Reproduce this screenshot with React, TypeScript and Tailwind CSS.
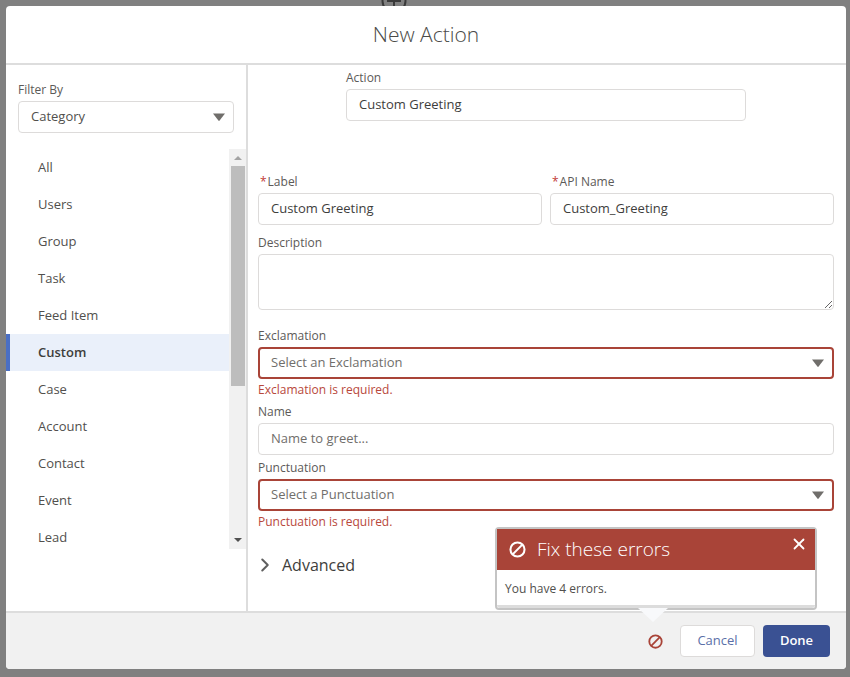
import { ChevronRight, X } from "lucide-react";

const CATEGORIES = ["All", "Users", "Group", "Task", "Feed Item", "Custom", "Case", "Account", "Contact", "Event", "Lead"];

const fieldLabel = "mb-0.5 block text-xs leading-[18px] text-[#5c5a58]";
const inputBox =
  "block h-8 w-full rounded border border-[#dddbda] bg-white px-3 pb-0.5 text-[13px] text-[#3e3e3c] outline-none placeholder:text-[#706e6b]";

function Caret() {
  return (
    <svg viewBox="0 0 12 8" className="h-2 w-3 shrink-0 fill-[#706e6b]">
      <path d="M0 0.5h12L6.6 7.6a.8.8 0 0 1-1.2 0z" />
    </svg>
  );
}

function NoEntry({ className }: { className: string }) {
  return (
    <svg viewBox="0 0 14 14" fill="none" stroke="currentColor" strokeWidth="1.7" className={className}>
      <circle cx="7" cy="7" r="5.8" />
      <path d="M3 11L11 3" />
    </svg>
  );
}

function ErrorSelect({ label, placeholder, error }: { label: string; placeholder: string; error: string }) {
  return (
    <div>
      <label className={fieldLabel}>{label}</label>
      <div className="flex h-8 items-center justify-between rounded border-2 border-[#a94438] bg-white pl-[11px] pr-[8px] text-[13px] text-[#706e6b]">
        <span>{placeholder}</span>
        <Caret />
      </div>
      <p className="h-5 pt-px text-xs leading-5 text-[#b8483c]">{error}</p>
    </div>
  );
}

function CategoryList() {
  return (
    <div className="relative mt-4 h-[400px] overflow-hidden">
      <ul>
        {CATEGORIES.map((name) => (
          <li
            key={name}
            className={
              name === "Custom"
                ? "flex h-[37px] items-center border-l-4 border-[#4a6fc4] bg-[#eaf0fa] pl-[28px] text-[13px] font-semibold text-[#3e3e3c]"
                : "flex h-[37px] items-center pl-[32px] text-[13px] text-[#514f4d]"
            }
          >
            {name}
          </li>
        ))}
      </ul>
      <div className="absolute right-0 top-0 flex h-full w-[17px] flex-col items-center bg-[#f1f1f1]">
        <div className="mt-[7px] h-0 w-0 border-x-[4px] border-b-[4px] border-x-transparent border-b-[#a3a3a3]" />
        <div className="mt-[6px] h-[220px] w-[14px] bg-[#bdbdbd]" />
        <div className="mt-auto mb-[7px] h-0 w-0 border-x-[4px] border-t-[4px] border-x-transparent border-t-[#505050]" />
      </div>
    </div>
  );
}

function ErrorPopover() {
  return (
    <div className="absolute left-[489px] top-[521px] w-[322px] rounded border-2 border-[#c4c4c4] bg-white">
      <div className="flex h-[41px] items-center bg-[#a94438] pl-[12px] text-white">
        <NoEntry className="h-[17px] w-[17px]" />
        <span className="ml-[11px] text-[19px] font-light">Fix these errors</span>
        <X className="absolute right-[7px] top-[6px] h-[18px] w-[18px]" strokeWidth={2.4} />
      </div>
      <p className="h-[35px] pl-[8px] pt-px text-xs leading-[35px] text-[#514f4d]">You have 4 errors.</p>
      <div className="h-[3px] rounded-b-sm bg-[#dcdcdc]" />
      <div className="absolute left-[141px] top-full h-0 w-0 border-x-[15px] border-t-[14px] border-x-transparent border-t-[#f8f9fb]" />
    </div>
  );
}

export default function App() {
  return (
    <div
      className="relative h-[677px] w-[850px] overflow-hidden bg-[#808080] p-[6px] pb-[8px] pr-[4px]"
      style={{ fontFamily: '"Open Sans", "Noto Sans", sans-serif' }}
    >
      {/* bit of the page behind the overlay, cut off by the window top */}
      <svg viewBox="0 0 26 26" fill="none" stroke="#3a3a3a" strokeWidth="2" className="absolute left-[381px] top-[-12px] h-[26px] w-[26px]">
        <circle cx="13" cy="13" r="11.5" />
        <path d="M13 6v14M6 13h14" />
      </svg>

      <div className="relative flex h-full flex-col overflow-hidden rounded bg-white">
        <header className="flex h-[59px] shrink-0 items-center justify-center border-b-2 border-[#dddddd]">
          <h1 className="text-[21px] font-light text-[#4a4a48]">New Action</h1>
        </header>

        <div className="flex min-h-0 flex-1">
          <aside className="w-[242px] shrink-0 border-r-2 border-[#dddddd]">
            <div className="px-3 pt-4">
              <label className={fieldLabel}>Filter By</label>
              <div className="flex h-8 w-[216px] items-center justify-between rounded border border-[#dddbda] pl-3 pr-[8px] text-[13px] text-[#514f4d]">
                <span>Category</span>
                <Caret />
              </div>
            </div>
            <CategoryList />
          </aside>

          <main className="min-w-0 flex-1 pl-[10px] pr-[12px]">
            <div className="ml-[88px] mt-1 w-[400px]">
              <label className={fieldLabel}>Action</label>
              <input readOnly value="Custom Greeting" className={inputBox} />
            </div>

            <div className="mt-[52px] flex gap-2">
              <div className="w-[284px]">
                <label className={fieldLabel}>
                  <span className="ml-0.5 mr-px text-[#c23934]">*</span>Label
                </label>
                <input readOnly value="Custom Greeting" className={inputBox} />
              </div>
              <div className="flex-1">
                <label className={fieldLabel}>
                  <span className="ml-0.5 mr-px text-[#c23934]">*</span>API Name
                </label>
                <input readOnly value="Custom_Greeting" className={inputBox} />
              </div>
            </div>

            <div className="mt-[9px]">
              <label className={fieldLabel}>Description</label>
              <textarea readOnly className="block h-14 w-full rounded border border-[#dddbda] outline-none" />
            </div>

            <div className="mt-[17px]">
              <ErrorSelect label="Exclamation" placeholder="Select an Exclamation" error="Exclamation is required." />
            </div>
            <div className="mt-1">
              <label className={fieldLabel}>Name</label>
              <input readOnly placeholder="Name to greet..." className={inputBox} />
            </div>
            <div className="mt-1">
              <ErrorSelect label="Punctuation" placeholder="Select a Punctuation" error="Punctuation is required." />
            </div>

            <div className="mt-[23px] flex h-[22px] items-center text-base text-[#3e3e3c]">
              <ChevronRight className="ml-[-4px] h-[22px] w-[22px] text-[#5f5f5f]" strokeWidth={2.2} />
              <span className="ml-[6px]">Advanced</span>
            </div>
          </main>
        </div>

        <footer className="flex h-[58px] shrink-0 items-center justify-end border-t-2 border-[#dddddd] bg-[#f1f1f1] pr-[16px]">
          <NoEntry className="mr-[17px] h-[15px] w-[15px] text-[#a94438]" />
          <button className="mr-2 h-8 w-[75px] rounded border border-[#dddbda] bg-white text-[13px] text-[#5a6fa8]">Cancel</button>
          <button className="h-8 w-[67px] rounded bg-[#3a5193] text-[13px] font-semibold text-white">Done</button>
        </footer>

        <ErrorPopover />
      </div>
    </div>
  );
}
